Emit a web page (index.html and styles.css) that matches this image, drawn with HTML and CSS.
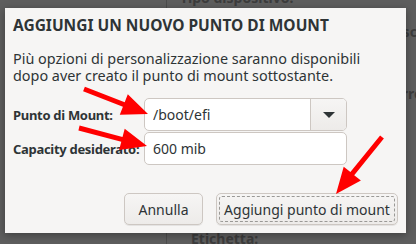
FILE: index.html
```html
<!DOCTYPE html>
<html>
<head>
<meta charset="utf-8" />
<link rel="stylesheet" href="styles.css">
</head>
<body>
<div class="backdrop">
  <span class="bg-line"></span>
  <span class="bg-text bg-type">Tipo dispositivo:</span>
  <span class="bg-text bg-desc">Descrizione:</span>
  <span class="bg-text bg-err">Errori:</span>
  <span class="bg-text bg-label">Etichetta:</span>
</div>
<main class="dialog">
  <h1 class="title">AGGIUNGI UN NUOVO PUNTO DI MOUNT</h1>
  <p class="intro">Più opzioni di personalizzazione saranno disponibili dopo aver creato il punto di mount sottostante.</p>
  <div class="form">
    <label for="mount">Punto di Mount:</label>
    <div class="combo">
      <input id="mount" type="text" value="/boot/efi" />
      <span class="combo-btn"><span class="caret"></span></span>
    </div>
    <label for="size">Capacity desiderato:</label>
    <input id="size" class="entry" type="text" value="600 mib" />
  </div>
  <div class="actions">
    <button class="btn btn-cancel">Annulla</button>
    <button class="btn btn-add"><span>Aggiungi punto di mount</span></button>
  </div>
</main>
<svg class="marks" width="416" height="244" viewBox="0 0 416 244">
  <polygon points="83.1,91.3 122.9,106.8 119.8,114.7 148,114 127.8,94.3 124.7,102.2 84.9,86.7" />
  <polygon points="78.4,130.4 121.3,141.7 119.1,149.9 147,146 124.7,128.7 122.5,136.9 79.6,125.6" />
  <polygon points="380.1,135.4 350.4,172.1 343.7,166.8 336,194 360.9,180.6 354.2,175.3 383.9,138.6" />
</svg>
</body>
</html>
```

FILE: styles.css
```css
:root {--bg: #f6f5f4; --fg: #2e3436; --border: #cdc7c2; --font: 'Noto Sans', 'DejaVu Sans', sans-serif;}
html, body {margin: 0; width: 416px; height: 244px; overflow: hidden;}
body {background: #5e5e5e; font-family: var(--font); color: var(--fg); position: relative;}

.backdrop {position: absolute; inset: 0; overflow: hidden;}
.bg-line {position: absolute; left: 166px; top: 0; bottom: 0; width: 1px; background: #4c4c4c;}
.bg-text {position: absolute; font-size: 14px; font-weight: bold; color: #3c3c3c; white-space: nowrap;}
.bg-type {left: 180px; top: -12px;}
.bg-desc {left: 384px; top: 22px;}
.bg-err {left: 394px; top: 84px;}
.bg-label {left: 191px; top: 229px;}

.dialog {position: relative; margin: 8px 0 0 5px; width: 401px; height: 225px; box-sizing: border-box; padding: 7px 8px 8px 8px; background: var(--bg); box-shadow: 0 2px 8px rgba(0,0,0,0.35); display: flex; flex-direction: column;}
.title {margin: 0; font-size: 15.5px; line-height: 20px; font-weight: bold; white-space: nowrap;}
.intro {margin: 15px 0 0; font-size: 14.4px; line-height: 17px; width: 350px;}

.form {display: grid; grid-template-columns: 131px 203px; row-gap: 1px; margin-top: 14px; align-items: center;}
.form label {font-size: 13px; font-weight: bold; white-space: nowrap; letter-spacing: -0.3px;}
.combo {display: flex; height: 33px; box-sizing: border-box; border: 1px solid var(--border); border-radius: 5px; background: #fff; overflow: hidden;}
.combo input {flex: 1; min-width: 0; border: 0; outline: 0; padding: 0 8px; font: 14px var(--font); color: var(--fg); background: transparent;}
.combo-btn {width: 35px; border-left: 1px solid var(--border); background: linear-gradient(#f6f5f4, #edebe9); display: flex; align-items: center; justify-content: center;}
.caret {width: 0; height: 0; border-left: 6px solid transparent; border-right: 6px solid transparent; border-top: 6px solid var(--fg);}
.entry {height: 33px; box-sizing: border-box; border: 1px solid var(--border); border-radius: 5px; background: #fff; padding: 0 8px; font: 14px var(--font); color: var(--fg); outline: 0;}

.actions {margin-top: auto; display: flex; justify-content: flex-end; gap: 13px;}
.btn {height: 32px; box-sizing: border-box; border: 1px solid var(--border); border-radius: 5px; background: linear-gradient(#f6f5f4, #edebe9); font: 14px var(--font); color: var(--fg); padding: 0; box-shadow: 0 1px rgba(0,0,0,0.07);}
.btn-cancel {width: 79px;}
.btn-add {width: 182px; padding: 2px;}
.btn-add span {display: flex; align-items: center; justify-content: center; height: 100%; border: 1px dashed #9a9996; border-radius: 3px; box-sizing: border-box;}

.marks {position: absolute; left: 0; top: 0; pointer-events: none;}
.marks polygon {fill: #ff0000;}
```
